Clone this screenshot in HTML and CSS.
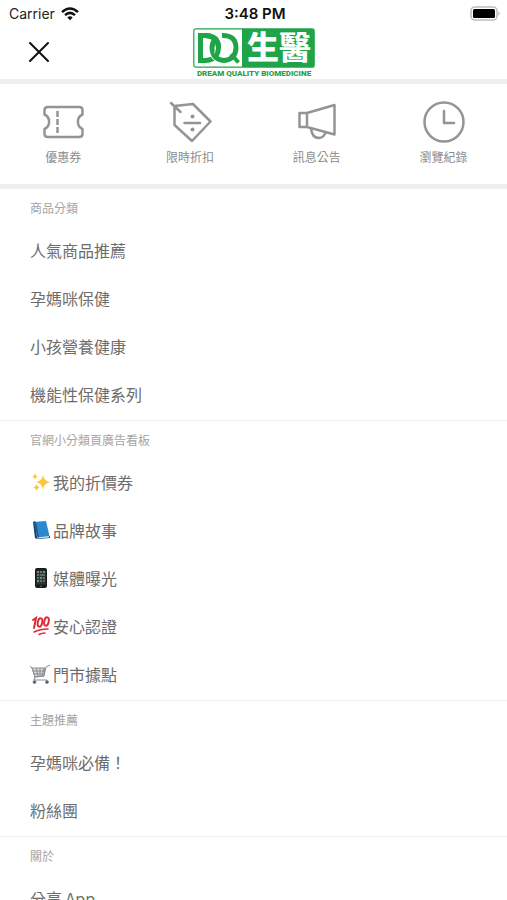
FILE: index.html
```html
<!DOCTYPE html>
<html lang="zh-Hant">
<head>
<meta charset="utf-8">
<meta name="viewport" content="width=device-width, initial-scale=1">
<title>DQ 生醫</title>
<link rel="stylesheet" href="styles.css">
</head>
<body>
<div class="status">
  <div class="carrier">
    <span>Carrier</span>
    <svg width="18" height="14" viewBox="0 0 18 14" fill="none" stroke="#111" stroke-width="2.5" aria-hidden="true">
      <path d="M1 5.1Q9-2.2 17 5.1"/><path d="M4 8.2Q9 3.6 14 8.2"/><path d="M6.3 10.5Q9 8 11.7 10.5L9 13.3Z" fill="#111" stroke="none"/>
    </svg>
  </div>
  <time class="clock">3:48 PM</time>
  <svg class="battery" width="31" height="16" viewBox="0 0 31 16" aria-hidden="true">
    <rect x="1" y="1" width="26" height="13" rx="4" fill="#fff" stroke="#bdbdbd" stroke-width="1.6"/>
    <rect x="3" y="3" width="22" height="9" rx="1.5" fill="#000"/>
    <path d="M28.5 5.2Q31 7.5 28.5 9.8Z" fill="#aaa"/>
  </svg>
</div>
<header class="topbar">
  <button class="close" type="button" aria-label="關閉">
    <svg width="20" height="20" viewBox="0 0 20 20" fill="none" stroke="#111" stroke-width="2" stroke-linecap="round"><path d="M1 1L19 19M19 1L1 19"/></svg>
  </button>
  <a class="logo" href="#">
    <svg width="122" height="50" viewBox="0 0 122 50" role="img">
      <rect x=".8" y=".8" width="120.4" height="38.4" rx="2" fill="#fff" stroke="#1fa548" stroke-width="1.2"/>
      <path d="M49 1H119Q121 1 121 3V37Q121 39 119 39H49Z" fill="#1fa548"/>
      <g fill="none" stroke="#1fa548" stroke-width="5">
        <path d="M7.500 7.500V32.500H13Q25.500 31.500 25.500 20T13 7.500H5"/>
        <path d="M19 20Q19.500 31 31 32" stroke="#fff" stroke-width="7"/>
        <path d="M29 7.500Q43 7 43 20Q42.500 31.500 31 32.500Q19.500 31.500 19 20Q19 15 21.500 12"/>
        <path d="M25.500 19Q25.500 24 24 27" stroke="#fff" stroke-width="7"/>
        <path d="M13 7.500Q25.500 8 25.500 20Q25.500 24 23 28"/>
        <path d="M38 26L45.500 34.500" stroke-width="4"/>
      </g>
      <text class="logo-name" x="54" y="31">生醫</text>
      <text class="logo-tag" x="61" y="48" text-anchor="middle">DREAM QUALITY BIOMEDICINE</text>
    </svg>
  </a>
</header>
<nav class="quick">
  <a href="#">
    <svg width="44" height="44" viewBox="0 0 44 44"><path d="M7 7H38Q41.500 7 41.500 10V14.500A8 8 0 0 0 41.500 29V34Q41.500 37 38 37H7Q3.500 37 3.500 34V29A8 8 0 0 0 3.500 14.500V10Q3.500 7 7 7Z"/><path stroke-linecap="butt" d="M16.500 11V17M16.500 19V25M16.500 27V33"/></svg>
    <span>優惠券</span>
  </a>
  <a href="#">
    <svg width="44" height="44" viewBox="0 0 44 44"><path d="M6.500 6L25 4L42.500 21.500L24 41L6.500 25ZM3 3L12.500 12M16.500 23H32"/><circle class="dot" cx="24.500" cy="16.500" r="2"/><circle class="dot" cx="24.500" cy="29.500" r="2"/></svg>
    <span>限時折扣</span>
  </a>
  <a href="#">
    <svg width="44" height="44" viewBox="0 0 44 44"><path d="M4.500 13H12V27H4.500ZM12 13L39.500 5V34.500L12 27M16 28.500Q17 38 24 38Q29 37.500 30.500 32.500"/></svg>
    <span>訊息公告</span>
  </a>
  <a href="#">
    <svg width="44" height="44" viewBox="0 0 44 44"><circle cx="22" cy="22" r="19.500"/><path d="M22 11V23H32"/></svg>
    <span>瀏覽紀錄</span>
  </a>
</nav>
<main class="menu">
  <section>
    <h2>商品分類</h2>
    <a href="#">人氣商品推薦</a>
    <a href="#">孕媽咪保健</a>
    <a href="#">小孩營養健康</a>
    <a href="#">機能性保健系列</a>
  </section>
  <section>
    <h2>官網小分類頁廣告看板</h2>
    <a href="#"><svg width="20" height="20" viewBox="0 0 20 20" fill="#fbc63c" aria-hidden="true"><path d="M13 3Q14 9 20 10Q14 11 13 18Q12 11 6 10Q12 9 13 3ZM5 1.500Q5.500 4 8 4.500Q5.500 5 5 7.500Q4.500 5 2 4.500Q4.500 4 5 1.500ZM6.500 12Q7 15 9.500 15.500Q7 16 6.500 19Q6 16 3.500 15.500Q6 15 6.500 12Z"/></svg><span>我的折價券</span></a>
    <a href="#"><svg width="20" height="20" viewBox="0 0 20 20" aria-hidden="true"><path d="M3 2L5 1L7 17L20 16V18L7 19L5 18Z" fill="#173e66"/><path d="M7 16.500L19 15.500V17.500L7 18.500Z" fill="#dce6ee"/><path d="M4 2L16 1L19.500 16L7.500 17.500Z" fill="#2f87ce"/><path d="M4 2L6 1.800L9 17.300L7.500 17.500Z" fill="#1b5c97"/></svg><span>品牌故事</span></a>
    <a href="#"><svg width="20" height="20" viewBox="0 0 20 20" aria-hidden="true"><rect x="5" y="0" width="12" height="20" rx="2" fill="#191c1e"/><rect x="6.500" y="2.500" width="9" height="14" fill="#243b38"/><path d="M7 4H9M13 4H15M10 10H12M7 13H9" stroke="#4da580" stroke-width="2"/><path d="M10 4H12M7 7H9M13 10H15M10 13H12" stroke="#a65951" stroke-width="2"/><path d="M10 7H15M7 10H9M13 13H15" stroke="#6b7e8b" stroke-width="1.500"/><circle cx="11" cy="18.300" r=".8" fill="#777"/></svg><span>媒體曝光</span></a>
    <a href="#"><svg width="20" height="20" viewBox="0 0 20 20" fill="none" stroke="#df2b35" stroke-width="2" stroke-linecap="round" aria-hidden="true"><path d="M3 4L6 2L4 12"/><ellipse cx="10" cy="6.500" rx="2.200" ry="4.200" transform="rotate(12 10 6.500)"/><ellipse cx="16.500" cy="5.500" rx="2.200" ry="4.200" transform="rotate(12 16.500 5.500)"/><path d="M4 16Q10 13 18 13M9 18.500Q12 17 15 17" stroke-width="1.600"/></svg><span>安心認證</span></a>
    <a href="#"><svg width="20" height="20" viewBox="0 0 20 20" fill="none" stroke="#898e91" aria-hidden="true"><path d="M2 4H15L14 12L5 13Z" fill="#d7dadb"/><path d="M0 2L2 4L5 13L14 12L16 3L20 1M3 7H15M4 10H14M6 4L8 12M10 4V12M14 4L12 12M5 13L4 16H17"/><circle cx="4.500" cy="18" r="1.500" fill="#4c4f51"/><circle cx="17" cy="18" r="1.500" fill="#4c4f51"/></svg><span>門市據點</span></a>
  </section>
  <section>
    <h2>主題推薦</h2>
    <a href="#">孕媽咪必備！</a>
    <a href="#">粉絲團</a>
  </section>
  <section>
    <h2>關於</h2>
    <a href="#">分享 App</a>
  </section>
</main>
</body>
</html>
```
FILE: styles.css
```css
* {
  box-sizing: border-box;
}

html {
  height: 100%;
  overflow: hidden;
}

body {
  height: 100%;
  margin: 0;
  overflow: hidden;
  background: #fff;
  color: #6c6c6c;
  font-family: "Noto Sans CJK TC", sans-serif;
}

a {
  color: inherit;
  text-decoration: none;
}

svg {
  display: block;
  flex: none;
}

.status,
.topbar {
  display: grid;
  grid-template-columns: 1fr auto 1fr;
  align-items: center;
}

.status {
  height: 27px;
  padding: 0 6px 0 9px;
  font-family: Inter, sans-serif;
  font-size: 14px;
  color: #222;
}

.carrier {
  display: flex;
  align-items: center;
  gap: 6px;
}

.clock {
  font-size: 15px;
  font-weight: 600;
  color: #111;
}

.battery {
  justify-self: end;
}

.topbar {
  height: 57px;
  border-bottom: 5px solid #efefef;
}

.close {
  justify-self: start;
  margin-left: 19px;
  padding: 9px 10px 11px;
  border: 0;
  background: none;
}

.logo-name {
  fill: #fff;
  font-size: 32px;
  font-weight: 900;
}

.logo-tag {
  fill: #1fa548;
  font-family: Roboto, sans-serif;
  font-size: 8px;
  font-weight: 900;
}

.quick {
  display: grid;
  grid-template-columns: repeat(4, 1fr);
  height: 105px;
  padding-top: 16px;
  border-bottom: 5px solid #efefef;
  font-size: 12px;
  line-height: 20px;
  color: #8c8c8c;
}

.quick a {
  display: flex;
  flex-direction: column;
  align-items: center;
  gap: 3px;
}

.quick svg {
  fill: none;
  stroke: #949494;
  stroke-width: 2.5;
  stroke-linecap: round;
  stroke-linejoin: round;
}

.quick .dot {
  fill: #949494;
  stroke: none;
}

.menu section {
  padding: 0 30px 2px;
  border-bottom: 1px solid #efefef;
}

.menu h2 {
  margin: 0;
  font-size: 12px;
  font-weight: 400;
  line-height: 37px;
  color: #a4a4a4;
}

.menu a {
  display: flex;
  align-items: center;
  gap: 3px;
  height: 48px;
  font-size: 16px;
  line-height: 24px;
}
```
